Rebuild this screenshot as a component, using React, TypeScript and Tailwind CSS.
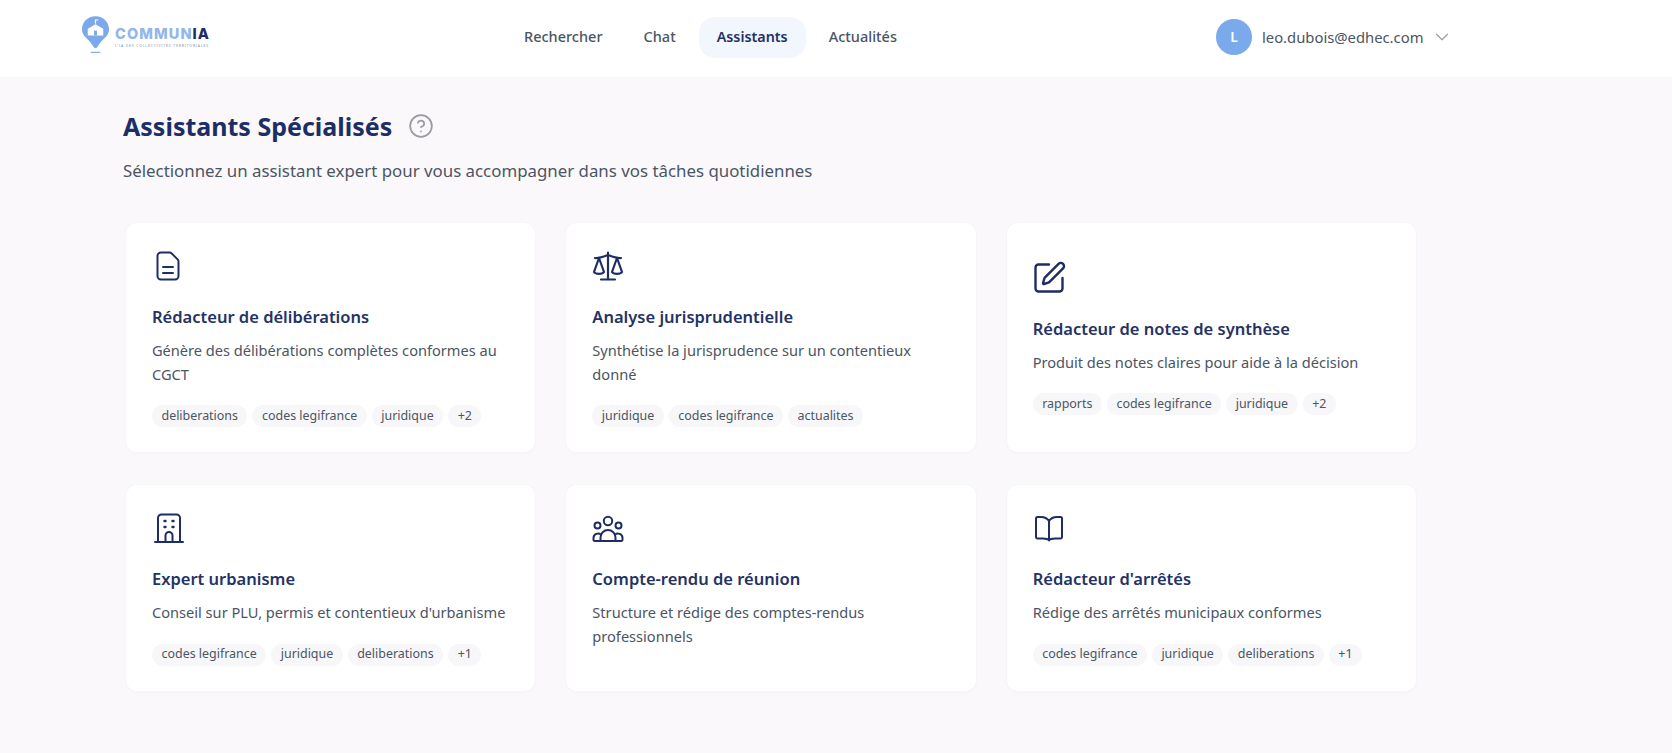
import { ChevronDown, CircleHelp, SquarePen } from "lucide-react";

const DocIcon = () => (
  <svg viewBox="0 0 32 32" fill="none" stroke="currentColor" strokeWidth="2" strokeLinecap="round" strokeLinejoin="round" className="w-8 h-8">
    <path d="M9 2.500h8.500a3 3 0 0 1 2.100.9l6 6a3 3 0 0 1 .9 2.100V26a3.500 3.500 0 0 1-3.500 3.500H9A3.500 3.500 0 0 1 5.500 26V6A3.500 3.500 0 0 1 9 2.500Z" />
    <path d="M11 17h10M11 23h10" />
  </svg>
);

const ScaleIcon = () => (
  <svg viewBox="0 0 32 32" fill="none" stroke="currentColor" strokeWidth="2.200" strokeLinecap="round" strokeLinejoin="round" className="w-8 h-8">
    <path d="M16 2.500v27M9 29.500h14" />
    <path d="M3 8c4 .5 9-1.500 13-3 4 1.500 9 3.500 13 3" />
    <path d="M7 8 2 22c1.500 2.500 8.500 2.500 10 0Z" />
    <path d="m25 8-5 14c1.500 2.500 8.500 2.500 10 0Z" />
  </svg>
);

const BuildingIcon = () => (
  <svg viewBox="0 0 32 32" fill="none" stroke="currentColor" strokeWidth="2" strokeLinecap="round" strokeLinejoin="round" className="w-8 h-8">
    <path d="M3 30h28" />
    <path d="M6 30V6a3.500 3.500 0 0 1 3.500-3.500h15A3.500 3.500 0 0 1 28 6v24" />
    <path d="M13.500 30v-6.500a3.500 3.500 0 0 1 7 0V30" />
    <path d="M12.500 9h1M20.500 9h1M12.500 15h1M20.500 15h1" strokeWidth="2.400" />
  </svg>
);

const GroupIcon = () => (
  <svg viewBox="0 0 32 32" fill="none" stroke="currentColor" strokeWidth="2" strokeLinecap="round" strokeLinejoin="round" className="w-8 h-8">
    <circle cx="16" cy="9" r="4.200" />
    <circle cx="5.500" cy="13.500" r="3" />
    <circle cx="26.500" cy="13.500" r="3" />
    <path d="M8.500 29v-3.500a7.500 7.500 0 0 1 15 0V29Z" />
    <path d="M8.500 29H3a1.500 1.500 0 0 1-1.500-1.500V26a4.500 4.500 0 0 1 7.500-3.300M23.500 29H29a1.500 1.500 0 0 0 1.500-1.500V26a4.500 4.500 0 0 0-7.500-3.300" />
  </svg>
);

const BookIcon = () => (
  <svg viewBox="0 0 32 32" fill="none" stroke="currentColor" strokeWidth="2" strokeLinecap="round" strokeLinejoin="round" className="w-8 h-8">
    <path d="M16 9c-2-3-5-4-8-4H4.500A1.500 1.500 0 0 0 3 6.500V25a1.500 1.500 0 0 0 1.500 1.500H10c2.500 0 5 .5 6 2 1-1.500 3.500-2 6-2h5.500A1.500 1.500 0 0 0 29 25V6.500A1.500 1.500 0 0 0 27.500 5H24c-3 0-6 1-8 4Zm0 0v19" />
  </svg>
);

const cards = [
  {
    icon: <DocIcon />,
    title: "Rédacteur de délibérations",
    desc: "Génère des délibérations complètes conformes au CGCT",
    tags: ["deliberations", "codes legifrance", "juridique", "+2"],
  },
  {
    icon: <ScaleIcon />,
    title: "Analyse jurisprudentielle",
    desc: "Synthétise la jurisprudence sur un contentieux donné",
    tags: ["juridique", "codes legifrance", "actualites"],
  },
  {
    icon: <SquarePen className="w-9 h-9 -m-0.5" strokeWidth={1.6} />,
    title: "Rédacteur de notes de synthèse",
    desc: "Produit des notes claires pour aide à la décision",
    tags: ["rapports", "codes legifrance", "juridique", "+2"],
  },
  {
    icon: <BuildingIcon />,
    title: "Expert urbanisme",
    desc: "Conseil sur PLU, permis et contentieux d'urbanisme",
    tags: ["codes legifrance", "juridique", "deliberations", "+1"],
  },
  {
    icon: <GroupIcon />,
    title: "Compte-rendu de réunion",
    desc: "Structure et rédige des comptes-rendus professionnels",
    tags: [],
  },
  {
    icon: <BookIcon />,
    title: "Rédacteur d'arrêtés",
    desc: "Rédige des arrêtés municipaux conformes",
    tags: ["codes legifrance", "juridique", "deliberations", "+1"],
  },
];

const Logo = () => (
  <div className="flex items-start">
    <svg viewBox="0 0 30 40" className="w-[29px] h-[39px] mt-[15px]">
      <path d="M15 1C7 1 1 7 1 14.500c0 8 8 10 12.500 19 .7 1 2.300 1 3 0C21 24.500 29 22.500 29 14.500 29 7 23 1 15 1Z" fill="#7aa9ec" />
      <path d="M7 14l8-4.500 8 4.500v7H7Z" fill="#fff" />
      <path d="M15 9V5h3" stroke="#fff" strokeWidth="1.200" fill="none" />
      <rect x="13.500" y="16" width="3" height="5" fill="#7aa9ec" />
      <path d="M10 38.500h10" stroke="#7aa9ec" strokeWidth="1.200" />
    </svg>
    <div className="ml-[5px] mt-[26px] flex flex-col">
      <div className="text-[14.500px] leading-[16px] font-extrabold tracking-[1.1px] text-[#93b6ea] font-['Inter',sans-serif]">
        COMMUN<span className="text-[#1f2d66]">IA</span>
      </div>
      <div className="mt-[1px] text-[3.500px] leading-[5px] tracking-[0.8px] text-[#8a93ab] whitespace-nowrap">
        L'IA DES COLLECTIVITÉS TERRITORIALES
      </div>
    </div>
  </div>
);

export default function App() {
  const nav = ["Rechercher", "Chat", "Assistants", "Actualités"];
  return (
    <div className="min-h-screen bg-[#faf8fa] font-['Noto_Sans',sans-serif]">
      <header className="h-[77px] bg-white flex items-center pl-[81px] pb-[3px]">
        <div className="w-[425px] h-[74px]">
          <Logo />
        </div>
        <nav className="w-[710px] flex items-center gap-[5px]">
          {nav.map((n) => (
            <a
              key={n}
              className={
                n === "Assistants"
                  ? "h-[41px] px-[18px] flex items-center rounded-2xl bg-[#f2f6fd] text-[#243264] text-[14.300px] font-semibold"
                  : "h-[41px] px-[18px] flex items-center rounded-2xl text-[#4b5563] text-[14.500px] font-medium"
              }
            >
              {n}
            </a>
          ))}
        </nav>
        <div className="flex items-center">
          <div className="w-9 h-9 rounded-full bg-[#7aa9ec] text-white text-sm font-semibold flex items-center justify-center">
            L
          </div>
          <span className="ml-2.5 text-[14.800px] text-[#4b5563]">leo.dubois@edhec.com</span>
          <ChevronDown className="ml-2 w-[22px] h-[22px] text-[#9ca3af]" strokeWidth={1.4} />
        </div>
      </header>

      <main className="pl-[123px] pt-[33px] w-[1417px]">
        <div className="flex items-center">
          <h1 className="text-[25px] leading-8 font-bold text-[#1c2e66]">Assistants Spécialisés</h1>
          <CircleHelp className="ml-4 w-[26px] h-[26px] text-[#9a9a9f]" strokeWidth={1.6} />
        </div>
        <p className="mt-[17px] text-[16.850px] leading-6 text-[#4b5563]">
          Sélectionnez un assistant expert pour vous accompagner dans vos tâches quotidiennes
        </p>

        <div className="mt-[39px] ml-[2px] grid grid-cols-3 gap-x-[29px] gap-y-[31px]">
          {cards.map((c) => (
            <div
              key={c.title}
              className={
                c.tags.length
                  ? "bg-white rounded-xl border border-[#f6f5f7] shadow-[0_1px_2px_rgba(0,0,0,0.02)] px-[26px] pt-[27px] pb-[25px] flex flex-col justify-center"
                  : "bg-white rounded-xl border border-[#f6f5f7] shadow-[0_1px_2px_rgba(0,0,0,0.02)] px-[26px] pt-[27px] pb-[25px] flex flex-col justify-start"
              }
            >
              <div className="text-[#1f2d66]">{c.icon}</div>
              <h3 className="mt-[23px] text-[16.500px] leading-6 font-semibold text-[#243264]">{c.title}</h3>
              <p className="mt-[10px] text-[14.600px] leading-[23.500px] text-[#4b5563]">{c.desc}</p>
              {c.tags.length > 0 && (
                <div className="mt-[19px] flex gap-[5px]">
                  {c.tags.map((t) => (
                    <span
                      key={t}
                      className="h-[22px] px-[9.500px] flex items-center rounded-full bg-[#f7f7f9] text-[12.450px] whitespace-nowrap text-[#4b5563]"
                    >
                      {t}
                    </span>
                  ))}
                </div>
              )}
            </div>
          ))}
        </div>
      </main>
    </div>
  );
}
